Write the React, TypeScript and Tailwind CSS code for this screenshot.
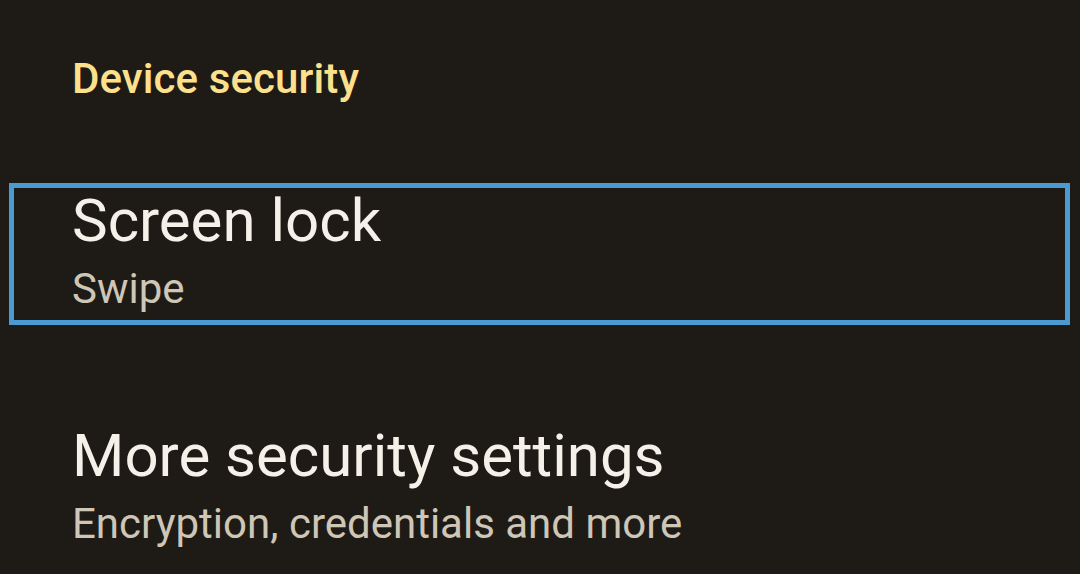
export default function App() {
  return (
    <div
      className="w-[1080px] h-[574px] overflow-hidden bg-[#1e1b17] flex flex-col"
      style={{ fontFamily: "Roboto, 'Noto Sans', sans-serif" }}
    >
      <div className="mt-[54px] pl-[72px] text-[42px] leading-[49px] font-medium tracking-[0.1px] text-[#fde08c]">
        Device security
      </div>
      <div className="mt-[80px] ml-[9px] w-[1061px] h-[142px] border-[5px] border-[#4a9bd4] pl-[58px] pt-[3px] flex flex-col">
        <div className="text-[60px] leading-[60px] text-[#f6f1e8]">Screen lock</div>
        <div className="mt-[13px] text-[42px] leading-[49px] text-[#cec6b6]">Swipe</div>
      </div>
      <div className="mt-[93px] ml-[14px] pl-[58px] pt-[8px] flex flex-col">
        <div className="text-[60px] leading-[60px] text-[#f6f1e8]">More security settings</div>
        <div className="mt-[13px] text-[42px] leading-[49px] text-[#cec6b6]">
          Encryption, credentials and more
        </div>
      </div>
    </div>
  );
}
